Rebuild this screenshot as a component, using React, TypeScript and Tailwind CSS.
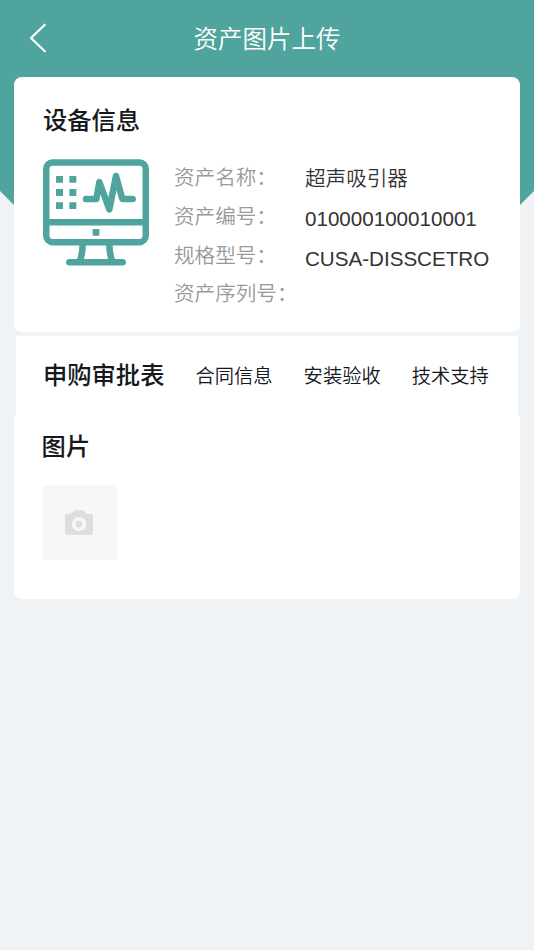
const DEVICE_FIELDS = [
  { label: "资产名称：", value: "超声吸引器" },
  { label: "资产编号：", value: "010000100010001" },
  { label: "规格型号：", value: "CUSA-DISSCETRO" },
  { label: "资产序列号：", value: "" },
];

const TABS = ["合同信息", "安装验收", "技术支持"];

function BackIcon() {
  return (
    <svg viewBox="0 0 20 32" className="h-8 w-5" aria-hidden="true">
      <path
        d="M16.800 2.700 3 16l13.800 13.300"
        fill="none"
        stroke="currentColor"
        strokeWidth="2.2"
        strokeLinecap="round"
        strokeLinejoin="round"
      />
    </svg>
  );
}

function MonitorIcon() {
  return (
    <svg viewBox="0 0 318 321" className="h-[107px] w-[106px]" aria-hidden="true">
      <g
        fill="none"
        stroke="currentColor"
        strokeWidth="19.5"
        strokeLinecap="round"
        strokeLinejoin="round"
      >
        <rect x="9.75" y="10.5" width="298.5" height="239" rx="19" />
        <path d="M10 190h298" />
        <path d="M129 120h31l9-51 30 82 20-100 19 69h31" />
        <path d="M79 310h160" />
        <path d="M119 253c0 24-3 42-10 55M199 253c0 24 3 42 10 55" />
      </g>
      <path
        d="M39 51h21v20H39zM79 51h21v20H79zM39 90h21v21H39zM79 90h21v21H79zM39 130h21v20H39zM79 130h21v20H79zM149 210h20v20h-20z"
        fill="currentColor"
      />
    </svg>
  );
}

function CameraIcon() {
  return (
    <svg viewBox="0 0 84 74" className="h-[25px] w-7" aria-hidden="true">
      <path
        fill="currentColor"
        fillRule="evenodd"
        d="M29 0h26q3 0 5 3l4 7q1 1 3 1h12q5 0 5 5v53q0 5-5 5H5q-5 0-5-5V16q0-5 5-5h12q2 0 3-1l4-7q2-3 5-3ZM42 20.500a21.500 21.500 0 1 0 0 43a21.500 21.500 0 1 0 0-43Z"
      />
      <circle cx="42" cy="42" r="10" fill="currentColor" />
    </svg>
  );
}

export default function App() {
  return (
    <div
      lang="zh-CN"
      className="relative min-h-[950px] w-full overflow-hidden bg-[#eff3f6] font-['Liberation_Sans','Noto_Sans_CJK_SC',sans-serif] text-[#15181c]"
    >
      <div className="absolute inset-x-0 top-0 h-[212px] bg-[#4fa59d] [clip-path:polygon(0_0,100%_0,100%_191px,513px_212px,21px_212px,0_191px)]" />

      <div className="relative">
        <header className="grid h-[77.300px] grid-cols-[60px_1fr_60px] items-center text-white">
          <button type="button" className="mb-[2px] ml-7" aria-label="返回">
            <BackIcon />
          </button>
          <h1 className="pt-1 text-center text-[24.500px] leading-none font-[350]">
            资产图片上传
          </h1>
        </header>

        <main className="px-[14.300px]">
          <section className="h-[254.700px] rounded-lg bg-white pt-7 pl-[28.700px]">
            <h2 className="text-[24.300px] leading-8 font-medium">设备信息</h2>
            <div className="mt-[22px] flex text-[20.600px]">
              <div className="text-[#4fa59d]">
                <MonitorIcon />
              </div>
              <ul className="ml-[25px] w-[131px] leading-[38.700px] font-[350] whitespace-nowrap text-[#999999]">
                {DEVICE_FIELDS.map((field) => (
                  <li key={field.label}>{field.label}</li>
                ))}
              </ul>
              <ul className="leading-[39.800px] font-[350] text-[#333333]">
                {DEVICE_FIELDS.map((field) => (
                  <li key={field.label}>{field.value}</li>
                ))}
              </ul>
            </div>
          </section>

          <nav className="mx-[1.700px] mt-[3.700px] flex h-[80.300px] items-center bg-white pl-[27px]">
            <span className="w-[152.500px] shrink-0 pt-px text-[24.300px] font-medium">
              申购审批表
            </span>
            <div className="flex gap-[31px] pt-[3px] text-[19.300px] font-[350] whitespace-nowrap">
              {TABS.map((tab) => (
                <span key={tab}>{tab}</span>
              ))}
            </div>
          </nav>

          <section className="h-[182.700px] rounded-b-lg bg-white pt-[15px] pl-[27.300px]">
            <h2 className="text-[24.300px] leading-8 font-medium">图片</h2>
            <button
              type="button"
              aria-label="上传图片"
              className="mt-[22px] flex h-[75px] w-[75px] items-center justify-center rounded-sm bg-[#f6f7f9] text-[#dddee0]"
            >
              <CameraIcon />
            </button>
          </section>
        </main>
      </div>
    </div>
  );
}
